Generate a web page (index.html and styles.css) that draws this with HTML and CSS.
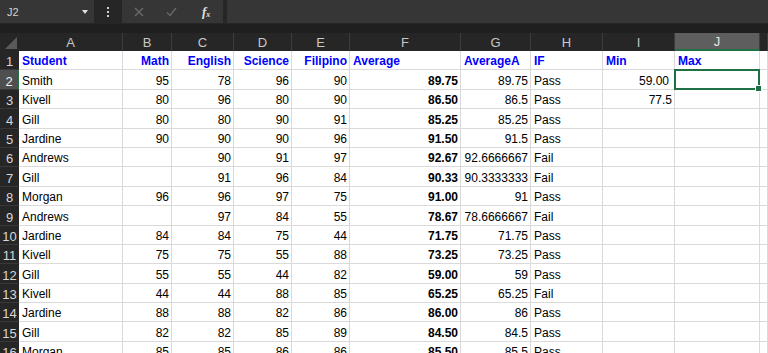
FILE: index.html
```html
<!DOCTYPE html>
<html>
<head>
<meta charset="utf-8">
<link rel="stylesheet" href="styles.css">
</head>
<body>
<div class="toolbar">
  <div class="namebox"><span>J2</span><span class="caret"></span></div>
  <div class="dots"><i></i><i></i><i></i></div>
  <div class="fbtns">
    <svg class="ico" width="10" height="10" viewBox="0 0 10 10"><path d="M1 1L9 9M9 1L1 9" stroke="#6a6a6a" stroke-width="1.4" fill="none"/></svg>
    <svg class="ico" width="11" height="10" viewBox="0 0 11 10"><path d="M1 5.5L4 8.5L10 1" stroke="#6a6a6a" stroke-width="1.4" fill="none"/></svg>
    <span class="fx">f<sub>x</sub></span>
  </div>
  <div class="fgap"></div>
  <div class="finput"></div>
</div>
<div class="spacer"></div>
<div class="sheet">
  <div class="row colhdr">
    <div class="corner"><svg width="12" height="12" viewBox="0 0 12 12"><polygon points="12,0 12,12 0,12" fill="#5a5a5a"/></svg></div>
    <div>A</div><div>B</div><div>C</div><div>D</div><div>E</div><div>F</div><div>G</div><div>H</div><div>I</div><div class="selcol">J</div><div></div>
  </div>
  <div class="row">
    <div class="rh">1</div>
    <div class="c h">Student</div><div class="c h r">Math</div><div class="c h r">English</div><div class="c h r">Science</div><div class="c h r">Filipino</div><div class="c h">Average</div><div class="c h">AverageA</div><div class="c h">IF</div><div class="c h">Min</div><div class="c h">Max</div><div class="c"></div>
  </div>
  <div class="row">
    <div class="rh selrow">2</div>
    <div class="c">Smith</div><div class="c r">95</div><div class="c r">78</div><div class="c r">96</div><div class="c r">90</div><div class="c r b">89.75</div><div class="c r">89.75</div><div class="c">Pass</div><div class="c r pad">59.00</div><div class="c active"><span class="sel"><span class="handle"></span></span></div><div class="c"></div>
  </div>
  <div class="row">
    <div class="rh">3</div>
    <div class="c">Kivell</div><div class="c r">80</div><div class="c r">96</div><div class="c r">80</div><div class="c r">90</div><div class="c r b">86.50</div><div class="c r">86.5</div><div class="c">Pass</div><div class="c r">77.5</div><div class="c"></div><div class="c"></div>
  </div>
  <div class="row">
    <div class="rh">4</div>
    <div class="c">Gill</div><div class="c r">80</div><div class="c r">80</div><div class="c r">90</div><div class="c r">91</div><div class="c r b">85.25</div><div class="c r">85.25</div><div class="c">Pass</div><div class="c"></div><div class="c"></div><div class="c"></div>
  </div>
  <div class="row">
    <div class="rh">5</div>
    <div class="c">Jardine</div><div class="c r">90</div><div class="c r">90</div><div class="c r">90</div><div class="c r">96</div><div class="c r b">91.50</div><div class="c r">91.5</div><div class="c">Pass</div><div class="c"></div><div class="c"></div><div class="c"></div>
  </div>
  <div class="row">
    <div class="rh">6</div>
    <div class="c">Andrews</div><div class="c r"></div><div class="c r">90</div><div class="c r">91</div><div class="c r">97</div><div class="c r b">92.67</div><div class="c r">92.6666667</div><div class="c">Fail</div><div class="c"></div><div class="c"></div><div class="c"></div>
  </div>
  <div class="row">
    <div class="rh">7</div>
    <div class="c">Gill</div><div class="c r"></div><div class="c r">91</div><div class="c r">96</div><div class="c r">84</div><div class="c r b">90.33</div><div class="c r">90.3333333</div><div class="c">Fail</div><div class="c"></div><div class="c"></div><div class="c"></div>
  </div>
  <div class="row">
    <div class="rh">8</div>
    <div class="c">Morgan</div><div class="c r">96</div><div class="c r">96</div><div class="c r">97</div><div class="c r">75</div><div class="c r b">91.00</div><div class="c r">91</div><div class="c">Pass</div><div class="c"></div><div class="c"></div><div class="c"></div>
  </div>
  <div class="row">
    <div class="rh">9</div>
    <div class="c">Andrews</div><div class="c r"></div><div class="c r">97</div><div class="c r">84</div><div class="c r">55</div><div class="c r b">78.67</div><div class="c r">78.6666667</div><div class="c">Fail</div><div class="c"></div><div class="c"></div><div class="c"></div>
  </div>
  <div class="row">
    <div class="rh">10</div>
    <div class="c">Jardine</div><div class="c r">84</div><div class="c r">84</div><div class="c r">75</div><div class="c r">44</div><div class="c r b">71.75</div><div class="c r">71.75</div><div class="c">Pass</div><div class="c"></div><div class="c"></div><div class="c"></div>
  </div>
  <div class="row">
    <div class="rh">11</div>
    <div class="c">Kivell</div><div class="c r">75</div><div class="c r">75</div><div class="c r">55</div><div class="c r">88</div><div class="c r b">73.25</div><div class="c r">73.25</div><div class="c">Pass</div><div class="c"></div><div class="c"></div><div class="c"></div>
  </div>
  <div class="row">
    <div class="rh">12</div>
    <div class="c">Gill</div><div class="c r">55</div><div class="c r">55</div><div class="c r">44</div><div class="c r">82</div><div class="c r b">59.00</div><div class="c r">59</div><div class="c">Pass</div><div class="c"></div><div class="c"></div><div class="c"></div>
  </div>
  <div class="row">
    <div class="rh">13</div>
    <div class="c">Kivell</div><div class="c r">44</div><div class="c r">44</div><div class="c r">88</div><div class="c r">85</div><div class="c r b">65.25</div><div class="c r">65.25</div><div class="c">Fail</div><div class="c"></div><div class="c"></div><div class="c"></div>
  </div>
  <div class="row">
    <div class="rh">14</div>
    <div class="c">Jardine</div><div class="c r">88</div><div class="c r">88</div><div class="c r">82</div><div class="c r">86</div><div class="c r b">86.00</div><div class="c r">86</div><div class="c">Pass</div><div class="c"></div><div class="c"></div><div class="c"></div>
  </div>
  <div class="row">
    <div class="rh">15</div>
    <div class="c">Gill</div><div class="c r">82</div><div class="c r">82</div><div class="c r">85</div><div class="c r">89</div><div class="c r b">84.50</div><div class="c r">84.5</div><div class="c">Pass</div><div class="c"></div><div class="c"></div><div class="c"></div>
  </div>
  <div class="row">
    <div class="rh">16</div>
    <div class="c">Morgan</div><div class="c r">85</div><div class="c r">85</div><div class="c r">86</div><div class="c r">86</div><div class="c r b">85.50</div><div class="c r">85.5</div><div class="c">Pass</div><div class="c"></div><div class="c"></div><div class="c"></div>
  </div>
</div>
</body>
</html>
```
FILE: styles.css
```css
body {
  margin: 0;
  width: 768px;
  height: 353px;
  overflow: hidden;
  background: #1f1f1f;
  font-family: "Liberation Sans", Arial, sans-serif;
}
.toolbar {
  display: flex;
  height: 24px;
  background: #262626;
}
.namebox {
  width: 94px;
  height: 23px;
  box-sizing: border-box;
  background: #363636;
  display: flex;
  align-items: center;
  justify-content: space-between;
  padding: 0 6px 0 7px;
  color: #d4d4d4;
  font-size: 11px;
}
.caret {
  width: 0;
  height: 0;
  border-left: 3px solid transparent;
  border-right: 3px solid transparent;
  border-top: 4px solid #e0e0e0;
}
.dots {
  width: 28px;
  height: 23px;
  display: flex;
  flex-direction: column;
  align-items: center;
  justify-content: center;
  gap: 2px;
}
.dots i {
  display: block;
  width: 2px;
  height: 2px;
  background: #d0d0d0;
}
.fbtns {
  width: 101px;
  height: 23px;
  background: #363636;
  display: flex;
  align-items: center;
  padding-left: 12px;
  box-sizing: border-box;
}
.ico {
  margin-right: 22px;
}
.ico + .ico {
  margin-right: 25px;
}
.fx {
  color: #e0e0e0;
  font-family: "Liberation Serif", serif;
  font-style: italic;
  font-weight: bold;
  font-size: 13px;
}
.fx sub {
  font-size: 8px;
  vertical-align: -1px;
}
.fgap {
  width: 4px;
}
.finput {
  flex: 1;
  height: 23px;
  background: #363636;
}
.spacer {
  height: 9px;
}
.sheet {
  background: #fff;
}
.row {
  display: grid;
  grid-template-columns: 19px 104px 49px 62px 58px 58px 111px 70px 72px 72px 85px 1fr;
  height: 19.4px;
}
.colhdr {
  height: 18px;
  background: #1f1f1f;
}
.colhdr > div {
  background: #262626;
  color: #c8c8c8;
  font-size: 13px;
  display: flex;
  align-items: center;
  justify-content: center;
  border-right: 1px solid #3c3c3c;
  box-sizing: border-box;
}
.colhdr > .corner {
  align-items: flex-end;
  justify-content: flex-end;
  padding: 0 2px 2px 0;
  border-right: none;
}
.colhdr > .selcol {
  background: #5e5e5e;
  color: #e6e6e6;
  border-bottom: 2px solid #1f7145;
}
.rh {
  background: #262626;
  color: #d8d8d8;
  font-size: 13px;
  display: flex;
  align-items: flex-end;
  justify-content: center;
  line-height: 15px;
  border-bottom: 1px solid #383838;
  box-sizing: border-box;
}
.rh.selrow {
  background: #4f4f4f;
  color: #f0f0f0;
  border-right: 1px solid #1f7145;
}
.c {
  background: #fff;
  color: #000;
  font-size: 12px;
  line-height: 15px;
  display: flex;
  align-items: flex-end;
  justify-content: flex-start;
  padding: 0 2px 0 3px;
  border-right: 1px solid #dadada;
  border-bottom: 1px solid #dadada;
  box-sizing: border-box;
  white-space: nowrap;
  min-width: 0;
}
.c.r {
  justify-content: flex-end;
  padding: 0 2px 0 2px;
}
.c.pad {
  padding-right: 5px;
}
.c.b {
  font-weight: bold;
}
.c.h {
  font-weight: bold;
  color: #0000ff;
}
.c.active {
  position: relative;
}
.sel {
  position: absolute;
  left: -1px;
  top: -1px;
  right: -1px;
  bottom: -1px;
  border: 2px solid #1f7145;
}
.handle {
  position: absolute;
  right: -4px;
  bottom: -4px;
  width: 5px;
  height: 5px;
  background: #1f7145;
  border: 1px solid #fff;
}
```
